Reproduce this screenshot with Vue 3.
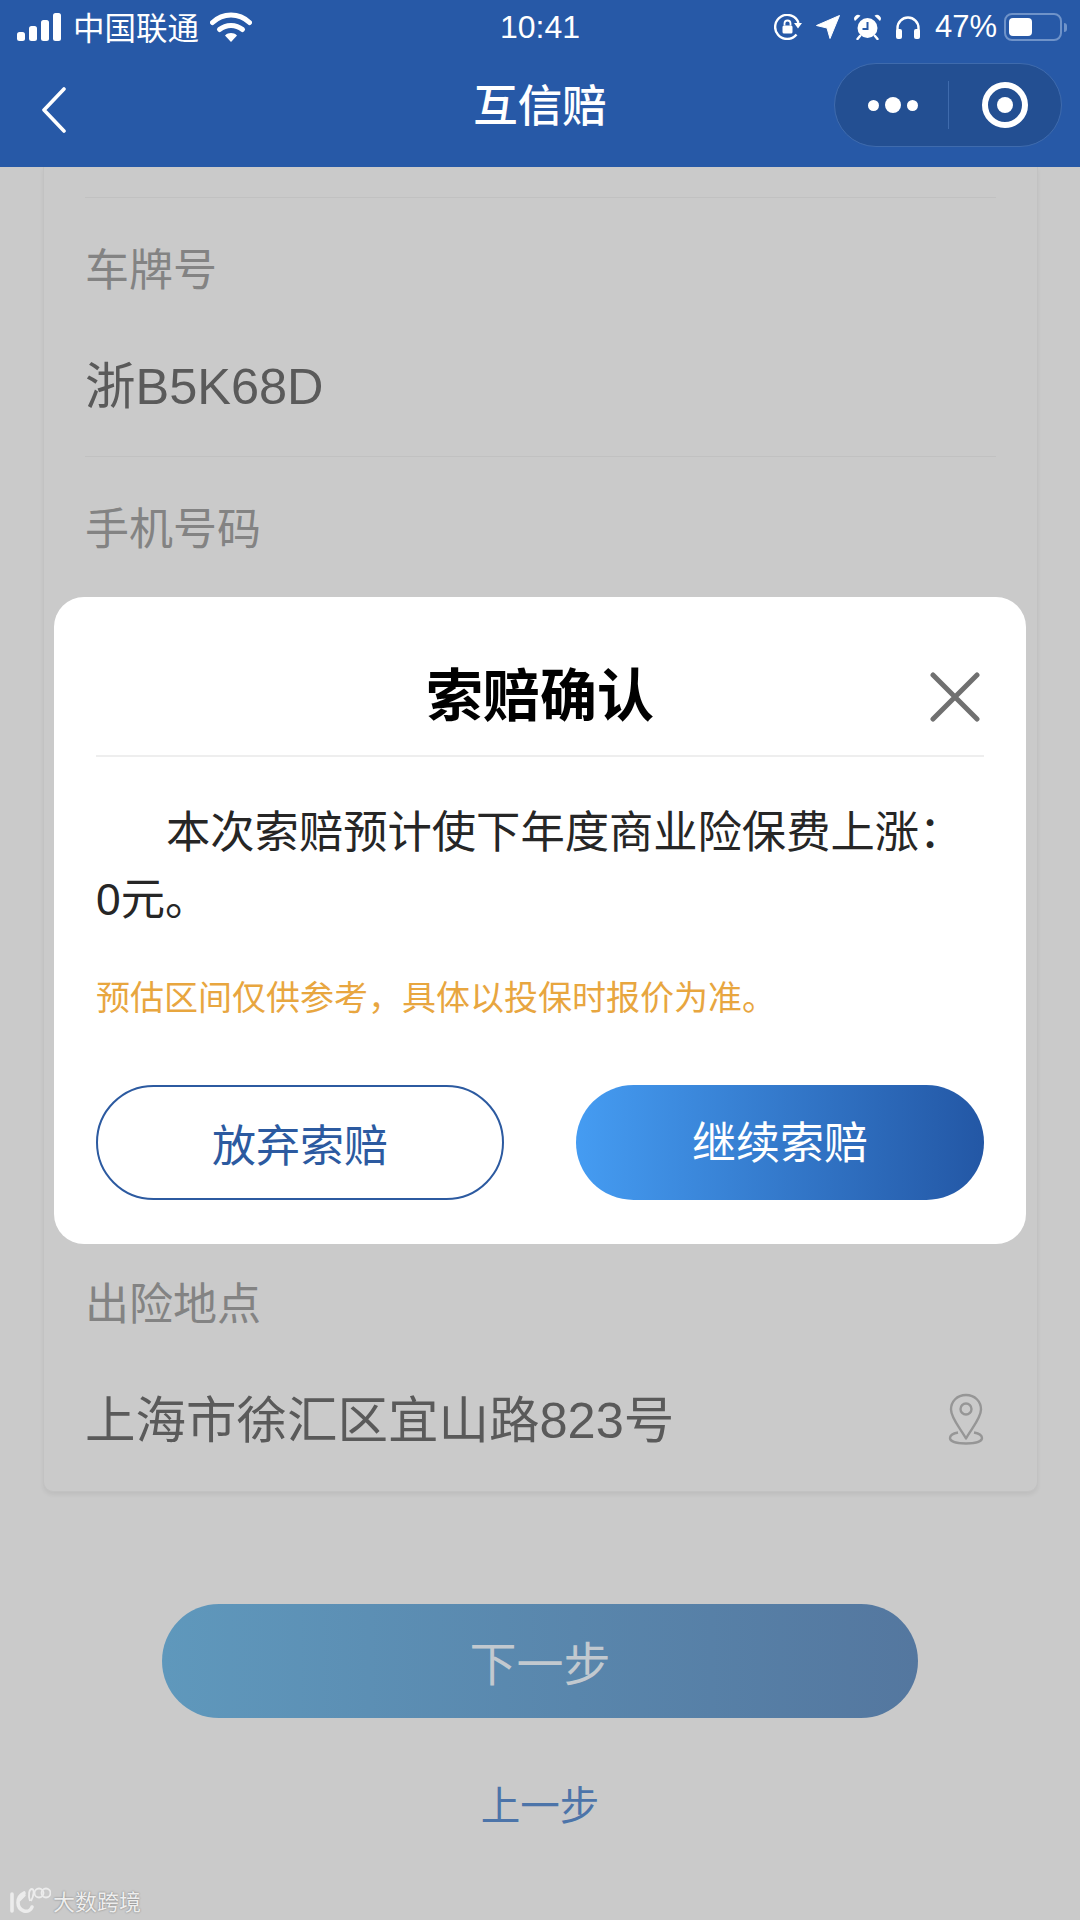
<script setup>
const rows = [
  { label: '车牌号', value: '浙B5K68D' },
  { label: '手机号码', value: '' },
  { label: '', value: '' },
  { label: '', value: '' },
  { label: '出险地点', value: '上海市徐汇区宜山路823号', pin: true }
]

// full-width colon and comma
const claimText = '本次索赔预计使下年度商业险保费上涨\uFF1A0元。'
const claimTip = '预估区间仅供参考\uFF0C具体以投保时报价为准。'
</script>

<template>
  <div class="page">
    <header class="topbar">
      <div class="status">
        <div class="status-left">
          <svg class="signal" width="46" height="28" viewBox="0 0 46 28">
            <rect x="0" y="19" width="8" height="9" rx="2.5" fill="#fff" />
            <rect x="12" y="13" width="8" height="15" rx="2.5" fill="#fff" />
            <rect x="24" y="7" width="8" height="21" rx="2.5" fill="#fff" />
            <rect x="36" y="0" width="8" height="28" rx="2.5" fill="#fff" />
          </svg>
          <span class="carrier">中国联通</span>
          <svg class="wifi" width="42" height="30" viewBox="0 0 42 30">
            <path d="M2.500 10.500C13 0.500 29 0.500 39.500 10.500" fill="none" stroke="#fff" stroke-width="5" stroke-linecap="round" />
            <path d="M9.500 17.500C16 12 26 12 32.500 17.500" fill="none" stroke="#fff" stroke-width="5" stroke-linecap="round" />
            <path d="M15 23.500C18.500 20.300 23.500 20.300 27 23.500L21 30Z" fill="#fff" />
          </svg>
        </div>
        <span class="time">10:41</span>
        <div class="status-right">
          <svg width="28" height="26" viewBox="0 0 28 26">
            <path d="M22.500 20.500A12 12 0 1 1 24.500 9" fill="none" stroke="#fff" stroke-width="2.400" />
            <path d="M20 9h8l-4 5.500Z" fill="#fff" />
            <rect x="8.500" y="11.500" width="10" height="8" rx="1.500" fill="#fff" />
            <path d="M10.500 11.500V9.500a3 3 0 0 1 6 0V11.500" fill="none" stroke="#fff" stroke-width="1.800" />
          </svg>
          <svg width="24" height="24" viewBox="0 0 24 24">
            <path d="M23.500 0.500L14 23.500 11 13 0.500 10.500Z" fill="#fff" stroke="#fff" stroke-linejoin="round" />
          </svg>
          <svg width="27" height="26" viewBox="0 0 27 26">
            <circle cx="13.500" cy="14" r="10" fill="#fff" />
            <path d="M13.500 8V15H8.500" fill="none" stroke="#2759a7" stroke-width="2" />
            <path d="M1 7L6.500 1.800A3.800 3.800 0 0 0 1 7ZM26 7L20.500 1.800A3.800 3.800 0 0 1 26 7Z" fill="#fff" />
            <path d="M6 22L3.500 25M21 22L23.500 25" stroke="#fff" stroke-width="2.400" stroke-linecap="round" />
          </svg>
          <svg width="26" height="23" viewBox="0 0 26 23">
            <path d="M2.500 15V12a10.500 10.500 0 0 1 21 0v3" fill="none" stroke="#fff" stroke-width="2.400" />
            <rect x="1" y="13" width="6" height="10" rx="2" fill="#fff" />
            <rect x="19" y="13" width="6" height="10" rx="2" fill="#fff" />
          </svg>
          <span class="battery-text">47%</span>
          <div class="battery">
            <div class="battery-fill" :style="{ width: '47%' }"></div>
          </div>
          <span class="battery-nub"></span>
        </div>
      </div>
      <div class="navbar">
        <svg class="back" width="26" height="46" viewBox="0 0 26 46">
          <path d="M23 2L3 23 23 44" fill="none" stroke="#fff" stroke-width="3.600" stroke-linecap="round" stroke-linejoin="round" />
        </svg>
        <span class="nav-title">互信赔</span>
        <div class="capsule">
          <div class="capsule-dots">
            <i class="dot"></i>
            <i class="dot big"></i>
            <i class="dot"></i>
          </div>
          <span class="capsule-line"></span>
          <div class="capsule-target">
            <i class="target-ring"><i class="target-core"></i></i>
          </div>
        </div>
      </div>
    </header>

    <section class="card">
      <div v-for="(row, i) in rows" :key="i" class="row">
        <div class="row-label">{{ row.label }}</div>
        <div class="row-value">
          <span>{{ row.value }}</span>
          <svg v-if="row.pin" class="pin" width="36" height="52" viewBox="0 0 36 52">
            <path d="M18 2C9 2 3 8.500 3 16.500 3 25 12 35 18 45.500 24 35 33 25 33 16.500 33 8.500 27 2 18 2Z" fill="none" stroke="#969696" stroke-width="2.400" stroke-linejoin="round" />
            <circle cx="18" cy="16" r="5.500" fill="none" stroke="#969696" stroke-width="2.400" />
            <path d="M10 39.500C5 40.500 2 42.500 2 45 2 48.500 9 50.500 18 50.500 27 50.500 34 48.500 34 45 34 42.500 31 40.500 26 39.500" fill="none" stroke="#969696" stroke-width="2.400" />
          </svg>
        </div>
      </div>
    </section>

    <div class="actions">
      <button class="next">下一步</button>
      <div class="prev">上一步</div>
    </div>

    <div class="modal">
      <div class="modal-head">
        <span class="modal-title">索赔确认</span>
        <svg class="close" width="50" height="50" viewBox="0 0 50 50">
          <path d="M3 3L47 47M47 3L3 47" stroke="#707070" stroke-width="5" stroke-linecap="round" />
        </svg>
      </div>
      <p class="modal-text">{{ claimText }}</p>
      <p class="modal-tip">{{ claimTip }}</p>
      <div class="modal-btns">
        <button class="btn ghost">放弃索赔</button>
        <button class="btn solid">继续索赔</button>
      </div>
    </div>

    <div class="mark">
      <svg width="42" height="28" viewBox="0 0 42 28">
        <path d="M3 8V25M15 7C7 11 7 22 15 25 19 26 22 24 23 21M9 15L15 9" fill="none" stroke="#ececec" stroke-width="3.600" stroke-linecap="round" />
        <path d="M21 15C19 9 20 3 23 3 25.500 3 25 10 22 15" fill="none" stroke="#ececec" stroke-width="1.800" />
        <circle cx="30" cy="7" r="4.500" fill="none" stroke="#ececec" stroke-width="1.800" />
        <circle cx="37" cy="7" r="4.500" fill="none" stroke="#ececec" stroke-width="1.800" />
      </svg>
      <span>大数跨境</span>
    </div>
  </div>
</template>

<style>
html,
body {
  margin: 0;
  background: #cacaca;
}
</style>

<style scoped>
.page {
  position: relative;
  width: 1080px;
  height: 1920px;
  overflow: hidden;
  background: #cacaca;
  font-family: "Liberation Sans", "Noto Sans CJK SC", sans-serif;
}

.topbar {
  height: 167px;
  background: #2759a7;
  color: #fff;
}

.status {
  height: 54px;
  display: grid;
  grid-template-columns: 1fr auto 1fr;
  align-items: center;
  font-size: 31px;
}

.status-left {
  display: flex;
  align-items: center;
  padding-left: 17px;
}

.carrier {
  margin-left: 10px;
  margin-top: 5px;
  font-size: 31.500px;
  line-height: 1;
}

.wifi {
  margin-left: 11px;
}

.time {
  font-size: 32px;
}

.status-right {
  display: flex;
  align-items: center;
  justify-content: flex-end;
  gap: 14px;
  padding-right: 13px;
}

.battery-text {
  font-size: 31px;
  margin-right: -7px;
}

.battery {
  box-sizing: border-box;
  width: 58px;
  height: 28px;
  padding: 3px;
  border: 2px solid #6f93c9;
  border-radius: 8px;
}

.battery-fill {
  height: 100%;
  background: #fff;
  border-radius: 4px;
}

.battery-nub {
  width: 3px;
  height: 9px;
  margin-left: -12px;
  background: #6f93c9;
  border-radius: 0 3px 3px 0;
}

.navbar {
  position: relative;
  height: 113px;
  display: flex;
  align-items: center;
  justify-content: center;
}

.back {
  position: absolute;
  left: 41px;
  top: 33px;
}

.nav-title {
  font-size: 44.500px;
  font-weight: 500;
  margin-bottom: 16px;
}

.capsule {
  position: absolute;
  left: 834px;
  top: 9px;
  box-sizing: border-box;
  width: 228px;
  height: 84px;
  display: flex;
  align-items: center;
  background: #234f92;
  border: 1px solid #3f6bad;
  border-radius: 42px;
}

.capsule-dots {
  box-sizing: border-box;
  width: 113px;
  padding-left: 3px;
  display: flex;
  align-items: center;
  justify-content: center;
  gap: 6px;
}

.dot {
  width: 11px;
  height: 11px;
  background: #fff;
  border-radius: 50%;
}

.dot.big {
  width: 16px;
  height: 16px;
}

.capsule-line {
  width: 1px;
  height: 48px;
  background: #3f6bad;
}

.capsule-target {
  flex: 1;
  display: flex;
  justify-content: center;
}

.target-ring {
  box-sizing: border-box;
  width: 46px;
  height: 46px;
  display: flex;
  align-items: center;
  justify-content: center;
  border: 6px solid #fff;
  border-radius: 50%;
}

.target-core {
  width: 16px;
  height: 16px;
  background: #fff;
  border-radius: 50%;
}

.card {
  box-sizing: border-box;
  width: 995px;
  height: 1325px;
  margin-left: 43px;
  padding: 30px 41px 0;
  background: #cacaca;
  border: 1px solid #c2c2c2;
  border-top: 0;
  border-radius: 0 0 10px 10px;
  box-shadow: 0 3px 4px rgba(0, 0, 0, 0.06);
}

.row {
  box-sizing: border-box;
  height: 258.500px;
  border-top: 1px solid #c1c1c1;
}

.row-label {
  height: 44px;
  margin-top: 51px;
  font-size: 44px;
  line-height: 44px;
  color: #838383;
}

.row-value {
  height: 72px;
  margin-top: 58px;
  display: flex;
  align-items: center;
  justify-content: space-between;
  font-size: 50.500px;
  line-height: 72px;
  color: #5a5a5a;
}

.pin {
  margin-right: 12px;
  margin-top: -4px;
}

.actions {
  display: flex;
  flex-direction: column;
  align-items: center;
  padding-top: 112px;
}

.next {
  width: 756px;
  height: 114px;
  padding-bottom: 2px;
  border: 0;
  border-radius: 57px;
  font: inherit;
  font-size: 47px;
  color: #c2c9cf;
  background: linear-gradient(90deg, #5f98bc, #54779f);
}

.prev {
  margin-top: 60px;
  font-size: 39.500px;
  line-height: 56px;
  color: #4c74a9;
}

.modal {
  position: absolute;
  left: 54px;
  top: 597px;
  box-sizing: border-box;
  width: 972px;
  height: 647px;
  padding: 0 42px;
  background: #fff;
  border-radius: 30px;
}

.modal-head {
  position: relative;
  height: 160px;
  display: flex;
  align-items: center;
  justify-content: center;
  padding-top: 29px;
  box-sizing: border-box;
  border-bottom: 2px solid #eeeeee;
}

.modal-title {
  font-size: 57px;
  font-weight: 700;
  color: #000;
}

.close {
  position: absolute;
  right: 4px;
  top: 75px;
}

.modal-text {
  margin: 42px 0 0;
  font-size: 44.300px;
  line-height: 67px;
  text-indent: 70px;
  color: #262626;
}

.modal-tip {
  margin: 39px 0 0;
  font-size: 34px;
  line-height: 52px;
  color: #e8a63f;
}

.modal-btns {
  display: flex;
  justify-content: space-between;
  margin-top: 61px;
}

.btn {
  box-sizing: border-box;
  width: 408px;
  height: 115px;
  border-radius: 58px;
  font: inherit;
  font-size: 44px;
}

.ghost {
  border: 2.500px solid #2c5aa0;
  background: #fff;
  color: #2c5aa0;
}

.solid {
  border: 0;
  padding-bottom: 7px;
  color: #fff;
  background: linear-gradient(90deg, #459cf2, #2357a5);
}

.mark {
  position: absolute;
  left: 9px;
  top: 1884px;
  display: flex;
  align-items: center;
  gap: 2px;
  font-size: 22px;
  color: #eeeeee;
  text-shadow: 0 0 2px rgba(0, 0, 0, 0.45);
}
</style>
